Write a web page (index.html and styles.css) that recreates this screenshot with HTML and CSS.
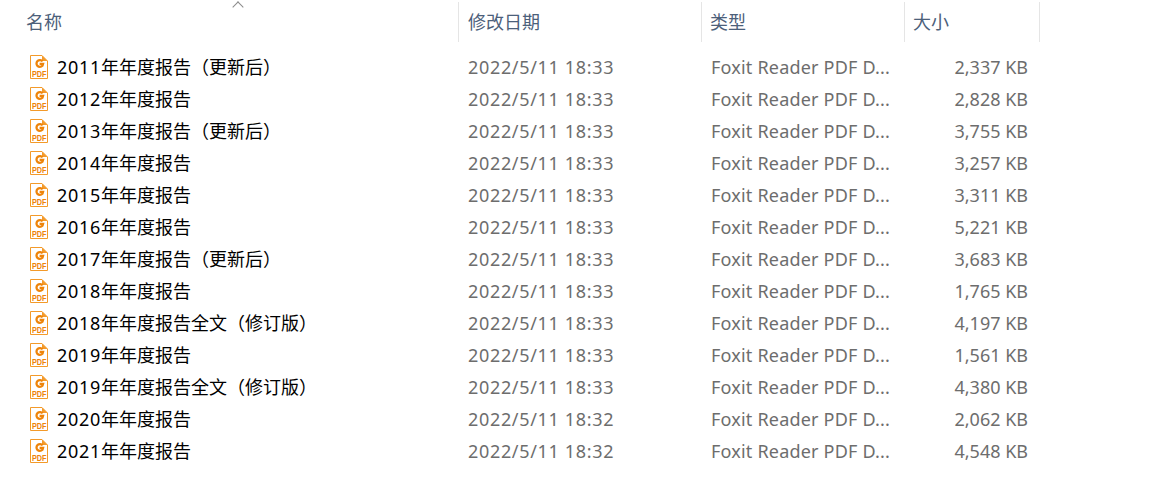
FILE: index.html
```html
<!DOCTYPE html>
<html lang="zh-CN">
<head>
<meta charset="UTF-8">
<title>年度报告</title>
<link rel="stylesheet" href="styles.css">
</head>
<body>

<svg class="defs" width="18" height="24">
    <symbol id="pdf" viewBox="0 0 18 24">
        <path d="M.5 .5H12L17.5 6V23.5H.5Z" fill="#fff" stroke="#f39a2a"/>
        <path d="M12 .5V6H17.5Z" fill="#f39a2a"/>
        <path d="M12.6 6.4A3.4 3.4 0 1 0 12.4 10.8L13 8.9H9.6" fill="none" stroke="#ee8409" stroke-width="2.3"/>
        <text x="9.2" y="22" class="pdf-label" text-anchor="middle" textLength="14.5" lengthAdjust="spacingAndGlyphs">PDF</text>
    </symbol>
</svg>

<div class="list">
    <div class="sort-mark"></div>
    <div class="head">
        <div class="col-name">名称</div>
        <div class="col-date">修改日期</div>
        <div class="col-type">类型</div>
        <div class="col-size">大小</div>
    </div>
    <div class="rows" id="rows">
        <div class="row"><div class="name"><svg class="icon"><use href="#pdf"/></svg><span class="year">2011</span>年年度报告（更新后）</div><div class="date">2022/5/11 18:33</div><div class="type">Foxit Reader PDF D...</div><div class="size">2,337 KB</div></div>
        <div class="row"><div class="name"><svg class="icon"><use href="#pdf"/></svg><span class="year">2012</span>年年度报告</div><div class="date">2022/5/11 18:33</div><div class="type">Foxit Reader PDF D...</div><div class="size">2,828 KB</div></div>
        <div class="row"><div class="name"><svg class="icon"><use href="#pdf"/></svg><span class="year">2013</span>年年度报告（更新后）</div><div class="date">2022/5/11 18:33</div><div class="type">Foxit Reader PDF D...</div><div class="size">3,755 KB</div></div>
        <div class="row"><div class="name"><svg class="icon"><use href="#pdf"/></svg><span class="year">2014</span>年年度报告</div><div class="date">2022/5/11 18:33</div><div class="type">Foxit Reader PDF D...</div><div class="size">3,257 KB</div></div>
        <div class="row"><div class="name"><svg class="icon"><use href="#pdf"/></svg><span class="year">2015</span>年年度报告</div><div class="date">2022/5/11 18:33</div><div class="type">Foxit Reader PDF D...</div><div class="size">3,311 KB</div></div>
        <div class="row"><div class="name"><svg class="icon"><use href="#pdf"/></svg><span class="year">2016</span>年年度报告</div><div class="date">2022/5/11 18:33</div><div class="type">Foxit Reader PDF D...</div><div class="size">5,221 KB</div></div>
        <div class="row"><div class="name"><svg class="icon"><use href="#pdf"/></svg><span class="year">2017</span>年年度报告（更新后）</div><div class="date">2022/5/11 18:33</div><div class="type">Foxit Reader PDF D...</div><div class="size">3,683 KB</div></div>
        <div class="row"><div class="name"><svg class="icon"><use href="#pdf"/></svg><span class="year">2018</span>年年度报告</div><div class="date">2022/5/11 18:33</div><div class="type">Foxit Reader PDF D...</div><div class="size">1,765 KB</div></div>
        <div class="row"><div class="name"><svg class="icon"><use href="#pdf"/></svg><span class="year">2018</span>年年度报告全文（修订版）</div><div class="date">2022/5/11 18:33</div><div class="type">Foxit Reader PDF D...</div><div class="size">4,197 KB</div></div>
        <div class="row"><div class="name"><svg class="icon"><use href="#pdf"/></svg><span class="year">2019</span>年年度报告</div><div class="date">2022/5/11 18:33</div><div class="type">Foxit Reader PDF D...</div><div class="size">1,561 KB</div></div>
        <div class="row"><div class="name"><svg class="icon"><use href="#pdf"/></svg><span class="year">2019</span>年年度报告全文（修订版）</div><div class="date">2022/5/11 18:33</div><div class="type">Foxit Reader PDF D...</div><div class="size">4,380 KB</div></div>
        <div class="row"><div class="name"><svg class="icon"><use href="#pdf"/></svg><span class="year">2020</span>年年度报告</div><div class="date">2022/5/11 18:32</div><div class="type">Foxit Reader PDF D...</div><div class="size">2,062 KB</div></div>
        <div class="row"><div class="name"><svg class="icon"><use href="#pdf"/></svg><span class="year">2021</span>年年度报告</div><div class="date">2022/5/11 18:32</div><div class="type">Foxit Reader PDF D...</div><div class="size">4,548 KB</div></div>
    </div>
</div>

</body>
</html>
```
FILE: styles.css
```css
body {
    margin: 0;
    background-color: #fff;
    font-family: "Noto Sans", "Noto Sans CJK SC", sans-serif;
    font-size: 18px;
    overflow: hidden;
}

.defs {
    position: absolute;
    visibility: hidden;
}

.list {
    position: relative;
    width: 1040px;
    padding-top: 2px;
}

.sort-mark {
    position: absolute;
    left: 234px;
    top: 3px;
    width: 7px;
    height: 7px;
    border-top: 1px solid #8a8a8a;
    border-left: 1px solid #8a8a8a;
    transform: rotate(45deg);
}

.head, .row {
    display: grid;
    grid-template-columns: 459px 243px 203px 135px;
}

.head {
    height: 40px;
    line-height: 40px;
    color: #4c607a;
}

.head > div {
    border-right: 1px solid #e5e5e5;
    box-sizing: border-box;
    padding-left: 8px;
}

.head .col-name {
    padding-left: 26px;
}

.head .col-date {
    padding-left: 9px;
}

.rows {
    padding-top: 9px;
}

.row {
    height: 32px;
    line-height: 32px;
    white-space: nowrap;
}

.name {
    display: flex;
    align-items: center;
    padding-left: 30px;
    color: #000;
}

.year {
    letter-spacing: 0.7px;
}

.icon {
    width: 18px;
    height: 24px;
    margin-right: 9px;
    flex: none;
}

.pdf-label {
    font-family: "Liberation Sans", sans-serif;
    font-size: 9px;
    font-weight: bold;
    fill: #ee8409;
}

.date, .type, .size {
    color: #6d6d6d;
}

.date {
    padding-left: 9px;
    letter-spacing: 0.67px;
}

.type {
    padding-left: 9px;
    letter-spacing: 0.2px;
}

.size {
    text-align: right;
    padding-right: 12px;
}
```
